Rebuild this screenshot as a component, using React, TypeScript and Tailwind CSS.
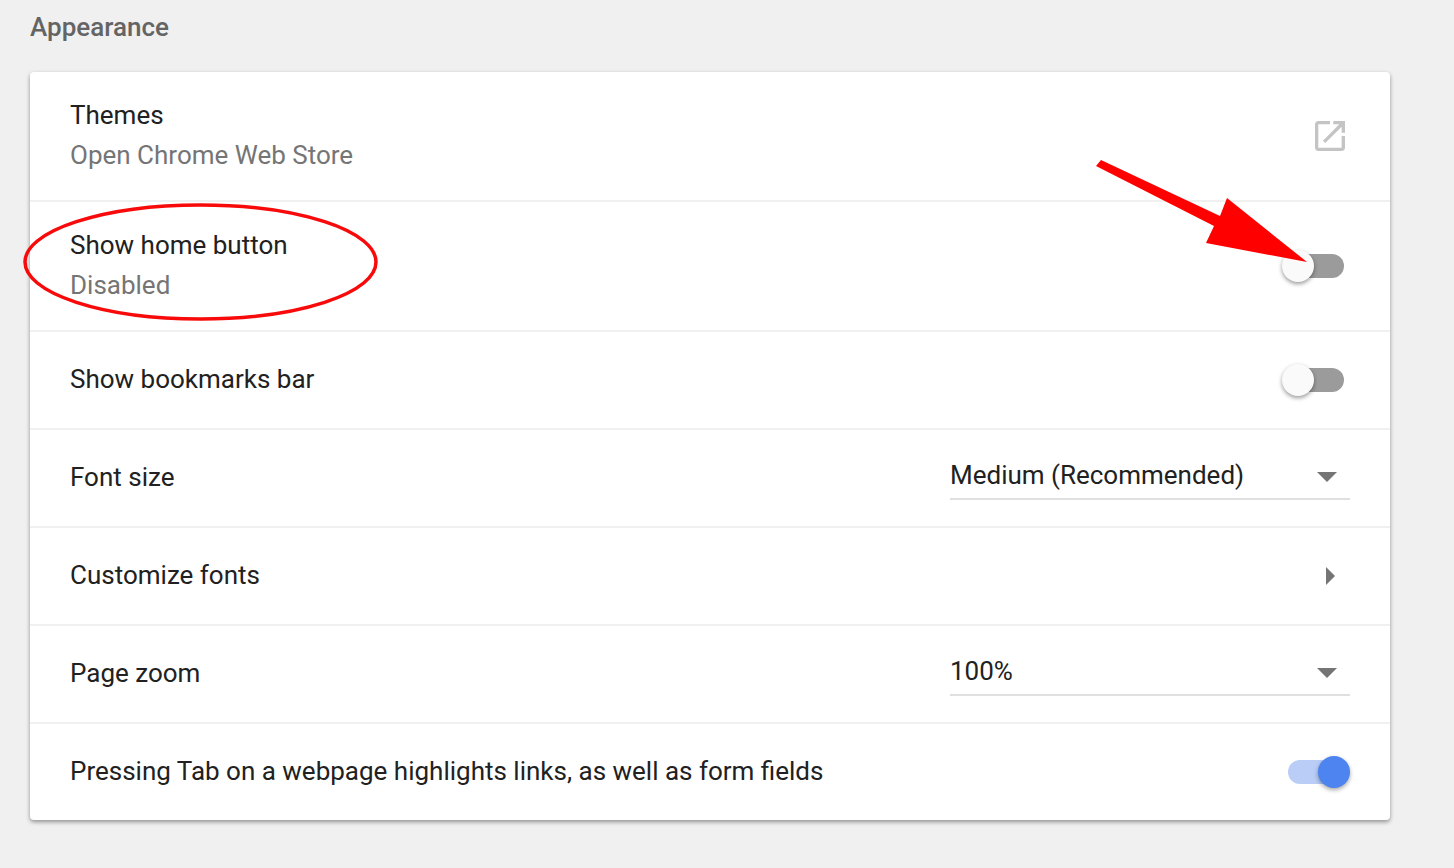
import { ReactNode } from "react";

function Toggle({ on = false }: { on?: boolean }) {
  if (on) {
    return (
      <div className="relative h-[24px] w-[62px]">
        <div className="absolute left-0 top-0 h-[24px] w-[48px] rounded-full bg-[#b9cdf7]" />
        <div className="absolute right-0 top-[-4px] h-[32px] w-[32px] rounded-full bg-[#4d84ef] shadow-[0_2px_4px_rgba(0,0,0,0.35)]" />
      </div>
    );
  }
  return (
    <div className="relative h-[24px] w-[62px]">
      <div className="absolute right-0 top-0 h-[24px] w-[48px] rounded-full bg-[#9b9b9b]" />
      <div className="absolute left-0 top-[-4px] h-[32px] w-[32px] rounded-full bg-[#fafafa] shadow-[0_2px_4px_rgba(0,0,0,0.4)]" />
    </div>
  );
}

function Dropdown({ value }: { value: string }) {
  return (
    <div className="mt-[-4px] flex h-[48px] w-[400px] items-center justify-between border-b-2 border-[#e0e0e0]">
      <span>{value}</span>
      <svg width="20" height="10" viewBox="0 0 20 10" className="mr-[13px] mt-[4px]">
        <path d="M0 0H20L10 10Z" fill="#757575" />
      </svg>
    </div>
  );
}

function Row({
  title,
  sub,
  right,
  tall = false,
  last = false,
}: {
  title: string;
  sub?: string;
  right?: ReactNode;
  tall?: boolean;
  last?: boolean;
}) {
  return (
    <div
      className={`flex items-center justify-between pl-[40px] pr-[40px] ${tall ? "h-[130px]" : last ? "h-[96px]" : "h-[98px]"} ${last ? "" : "border-b-2 border-[#f0f0f0]"}`}
    >
      <div className={tall ? "mt-[-2px]" : "mt-[-2px]"}>
        <div className="h-[40px] leading-[40px]">{title}</div>
        {sub && <div className="h-[40px] leading-[40px] text-[#757575]">{sub}</div>}
      </div>
      {right}
    </div>
  );
}

export default function App() {
  return (
    <div className="relative h-[868px] w-[1454px] overflow-hidden bg-[#f0f0f0] pl-[30px] pt-[8px] font-['Roboto',sans-serif] text-[26px] text-[#212121]">
      <h2 className="h-[64px] text-[26px] font-medium leading-[38px] text-[#646464]">Appearance</h2>
      <div className="w-[1360px] rounded-[4px] bg-white shadow-[0_2px_4px_rgba(0,0,0,0.4)]">
        <Row
          tall
          title="Themes"
          sub="Open Chrome Web Store"
          right={
            <svg width="30" height="30" viewBox="3 3 18 18" className="mr-[5px]">
              <path
                d="M19 19H5V5h7V3H5c-1.11 0-2 .9-2 2v14c0 1.1.89 2 2 2h14c1.1 0 2-.9 2-2v-7h-2v7zM14 3v2h3.59l-9.83 9.83 1.41 1.41L19 6.41V10h2V3h-7z"
                fill="#c4c4c4"
              />
            </svg>
          }
        />
        <Row tall title="Show home button" sub="Disabled" right={<div className="mr-[6px]"><Toggle /></div>} />
        <Row title="Show bookmarks bar" right={<div className="mr-[6px]"><Toggle /></div>} />
        <Row title="Font size" right={<Dropdown value="Medium (Recommended)" />} />
        <Row
          title="Customize fonts"
          right={
            <svg width="9" height="18" viewBox="0 0 9 18" className="mr-[15px]">
              <path d="M0 0L9 9L0 18Z" fill="#757575" />
            </svg>
          }
        />
        <Row title="Page zoom" right={<Dropdown value="100%" />} />
        <Row last title="Pressing Tab on a webpage highlights links, as well as form fields" right={<Toggle on />} />
      </div>
      {/* red annotations drawn over the screenshot */}
      <svg width="1454" height="868" viewBox="0 0 1454 868" fill="none" className="pointer-events-none absolute left-0 top-0">
        <ellipse cx="200.5" cy="262" rx="175.5" ry="57" stroke="#f80a0a" strokeWidth="3.5" />
        <path d="M1096 166L1101 160L1220 216L1227 198L1307 262L1206 243L1214 226Z" fill="#ff0000" />
      </svg>
    </div>
  );
}
